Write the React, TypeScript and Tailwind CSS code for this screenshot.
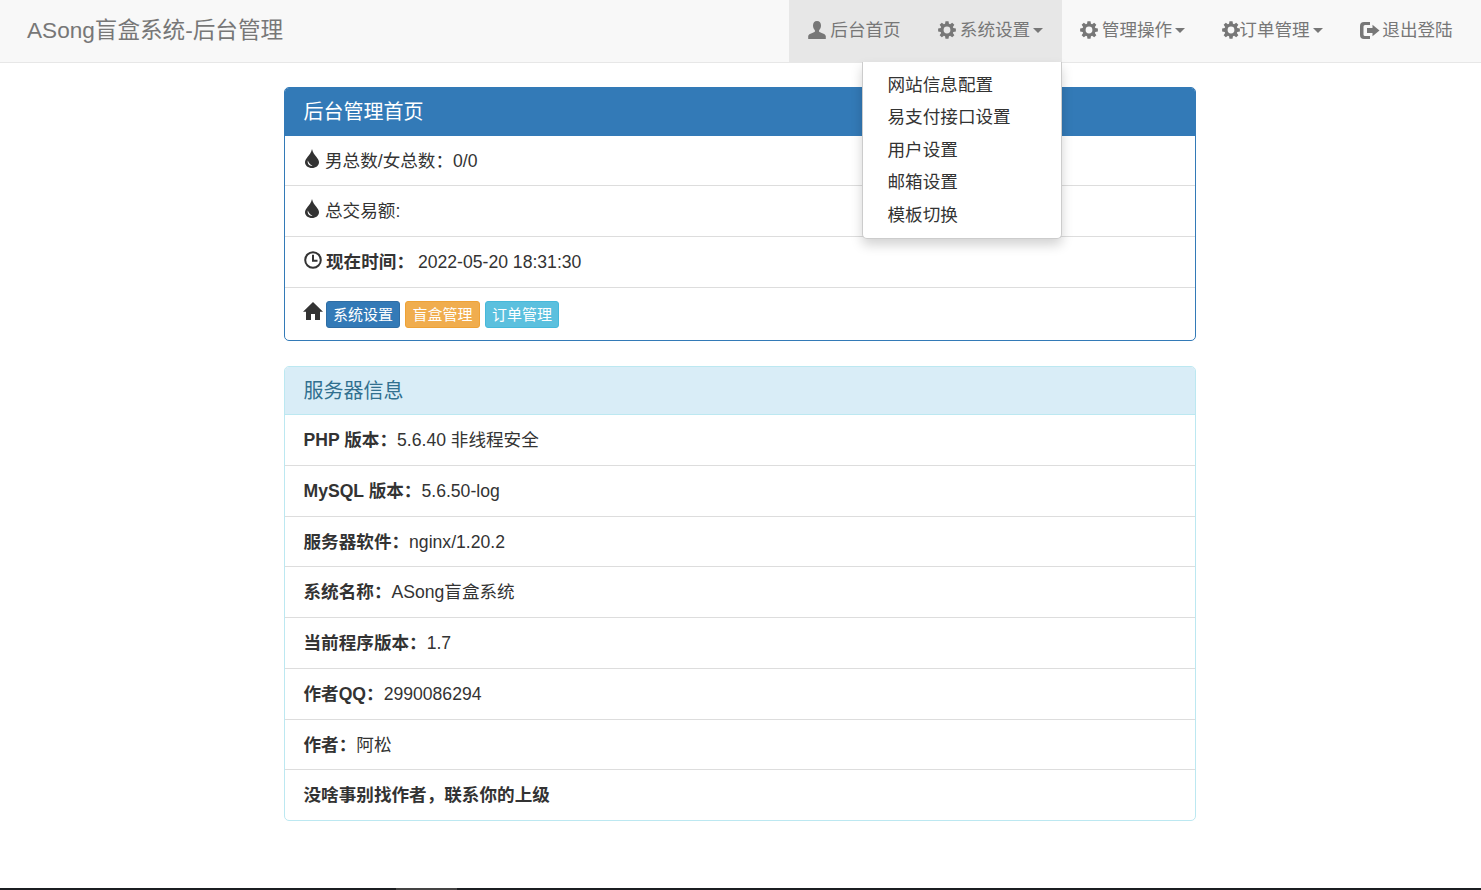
import React from "react";

const font = "[font-family:'Liberation_Sans','Noto_Sans_CJK_SC',sans-serif]";

function gearPath() {
  const pts: string[] = [];
  const teeth = 8;
  for (let i = 0; i < teeth; i++) {
    const a = (i * 2 * Math.PI) / teeth - Math.PI / 2;
    const offs: [number, number][] = [
      [-0.30, 6.6],
      [-0.17, 9],
      [0.17, 9],
      [0.30, 6.6],
    ];
    for (const [d, r] of offs) {
      pts.push(`${(9 + r * Math.cos(a + d)).toFixed(2)} ${(9 + r * Math.sin(a + d)).toFixed(2)}`);
    }
  }
  return `M${pts.join("L")}Z M9 5.6a3.4 3.4 0 1 0 0 6.8a3.4 3.4 0 1 0 0-6.8Z`;
}
const GEAR = gearPath();

function Gear() {
  return (
    <svg viewBox="0 0 18 18" className="h-[18px] w-[18px] shrink-0" fill="currentColor" fillRule="evenodd">
      <path d={GEAR} />
    </svg>
  );
}

function User() {
  return (
    <svg viewBox="0 0 18 18" className="h-[18px] w-[18px] shrink-0" fill="currentColor">
      <path d="M9 0C6.4 0 5 2 5 4.6c0 2 .8 3.6 1.900 4.600v1.200C6.900 11.600 0.600 12.200 0.200 15v3h17.600v-3c-.4-2.800-6.700-3.400-6.700-4.600V9.200C12.200 8.200 13 6.600 13 4.600 13 2 11.600 0 9 0z" />
    </svg>
  );
}

function LogOut() {
  return (
    <svg viewBox="0 0 20 17" className="h-[17px] w-[20px] shrink-0" fill="currentColor">
      <path d="M4 0h6v3H5a1.500 1.500 0 0 0-1.500 1.500v8A1.500 1.500 0 0 0 5 14h5v3H4a4 4 0 0 1-4-4V4a4 4 0 0 1 4-4z" />
      <path d="M7 6h5.500V2.800L19.500 8.500l-7 5.700V11H7z" />
    </svg>
  );
}

function Drop() {
  return (
    <svg viewBox="0 0 14 19" className="mb-[5px] ml-[1.5px] mr-[6px] h-[19px] w-[14px] shrink-0" fill="currentColor">
      <path
        fillRule="evenodd"
        d="M7 0C7.800 3.500 9.500 5.500 11.500 8C13 10 14 11.500 14 13.200 14 16.600 10.900 19 7 19S0 16.600 0 13.200C0 11.500 1 10 2.500 8C4.500 5.500 6.200 3.500 7 0zM2.800 11.500C2.200 14.800 4.200 17 7.600 17 5.300 15.800 3.800 14 2.800 11.500z"
      />
    </svg>
  );
}

function Clock() {
  return (
    <svg viewBox="0 0 18 18" className="mb-[4px] ml-[0.5px] mr-[4px] h-[18px] w-[18px] shrink-0" fill="none" stroke="currentColor" strokeWidth="2">
      <circle cx="9" cy="9" r="7.800" />
      <path d="M9 3.800V9.800H13.500" />
    </svg>
  );
}

function Home() {
  return (
    <svg viewBox="0 0 20 18" className="mb-[7px] ml-[-0.5px] mr-[3px] h-[18px] w-[20px] shrink-0" fill="currentColor">
      <path d="M10 0L20 9.800H17V18H12V12H8V18H3V9.800H0Z" />
    </svg>
  );
}

function Caret() {
  return <span className="ml-[3px] inline-block h-0 w-0 border-x-[5px] border-t-[5px] border-x-transparent border-t-current align-middle" />;
}

function NavItem({ icon, label, caret, active, gap, w }: { icon: React.ReactNode; label: string; caret?: boolean; active?: boolean; gap: string; w: string }) {
  return (
    <div className={`flex h-[62px] items-center justify-center pb-[1px] text-[17.6px] text-[#777] ${w} ${active ? "bg-[#e7e7e7]" : ""}`}>
      <span className={`flex items-center ${gap}`}>
        {icon}
        <span>{label}</span>
      </span>
      {caret && <Caret />}
    </div>
  );
}

function Row({ children, last, h }: { children: React.ReactNode; last?: boolean; h: string }) {
  return (
    <div className={`flex items-center px-[18.5px] text-[17.6px] text-[#333] ${h} ${last ? "" : "border-b border-[#ddd]"}`}>
      {children}
    </div>
  );
}

function Label({ children, color }: { children: React.ReactNode; color: string }) {
  return <span className={`mr-[5px] flex h-[27px] items-center justify-center rounded-[3px] border pt-[2px] text-[15px] text-white ${color}`}>{children}</span>;
}

const menu = ["网站信息配置", "易支付接口设置", "用户设置", "邮箱设置", "模板切换"];

const info: [string, string, string][] = [
  ["PHP 版本：", "5.6.40 非线程安全", "h-[51px]"],
  ["MySQL 版本：", "5.6.50-log", "h-[51px]"],
  ["服务器软件：", "nginx/1.20.2", "h-[50px] pt-[1px]"],
  ["系统名称：", "ASong盲盒系统", "h-[51px]"],
  ["当前程序版本：", "1.7", "h-[51px]"],
  ["作者QQ：", "2990086294", "h-[51px]"],
  ["作者：", "阿松", "h-[50px] pt-[1px]"],
  ["没啥事别找作者，联系你的上级", "", "h-[50px]"],
];

export default function App() {
  return (
    <div className={`relative flex h-[890px] flex-col overflow-hidden bg-white ${font}`}>
      <header className="flex h-[63px] shrink-0 items-start justify-between border-b border-[#e7e7e7] bg-[#f8f8f8]">
        <div className="flex h-[62px] items-center pl-[27px] text-[22.6px] text-[#777]">ASong盲盒系统-后台管理</div>
        <nav className="flex pr-[9px]">
          <NavItem w="w-[129px] pl-[2px]" gap="gap-[4px]" active icon={<User />} label="后台首页" />
          <NavItem w="w-[144px] pl-[1px]" gap="gap-[4px]" active caret icon={<Gear />} label="系统设置" />
          <NavItem w="w-[141px]" gap="gap-[4px]" caret icon={<Gear />} label="管理操作" />
          <NavItem w="w-[138px] pl-[1px]" gap="-space-x-px" caret icon={<Gear />} label="订单管理" />
          <NavItem w="w-[131px]" gap="gap-[2px]" icon={<LogOut />} label="退出登陆" />
        </nav>
      </header>

      <main className="ml-[284px] mt-[24px] w-[912px]">
        <section className="overflow-hidden rounded-[5px] border border-[#337ab7]">
          <div className="flex h-[48px] items-center bg-[#337ab7] px-[18.5px] text-[20px] text-white">后台管理首页</div>
          <Row h="h-[50px] pt-[1px]">
            <Drop />
            男总数/女总数：0/0
          </Row>
          <Row h="h-[51px]">
            <Drop />
            总交易额:
          </Row>
          <Row h="h-[51px]">
            <Clock />
            <b>现在时间：</b>
            <span className="ml-[4px]">2022-05-20 18:31:30</span>
          </Row>
          <Row last h="h-[52px]">
            <Home />
            <Label color="w-[74px] border-[#2e6da4] bg-[#337ab7]">系统设置</Label>
            <Label color="w-[75px] border-[#eea236] bg-[#f0ad4e]">盲盒管理</Label>
            <Label color="w-[74px] border-[#46b8da] bg-[#5bc0de]">订单管理</Label>
          </Row>
        </section>

        <section className="mt-[25px] overflow-hidden rounded-[5px] border border-[#bce8f1]">
          <div className="flex h-[48px] items-center border-b border-[#bce8f1] bg-[#d9edf7] px-[18.5px] pt-[1px] text-[20px] text-[#31708f]">服务器信息</div>
          {info.map(([k, v, h], i) => (
            <Row key={k} h={h} last={i === info.length - 1}>
              <b>{k}</b>
              <span>{v}</span>
            </Row>
          ))}
        </section>
      </main>

      <div className="absolute left-[862px] top-[62px] w-[200px] rounded-b-[5px] border border-t-0 border-[#ccc] bg-white pb-[7px] pt-[7px] shadow-[0_6px_12px_rgba(0,0,0,0.175)]">
        {menu.map((m) => (
          <div key={m} className="flex h-[32.4px] items-center pl-[24.5px] text-[17.6px] text-[#333]">{m}</div>
        ))}
      </div>

      <div className="absolute bottom-0 left-0 h-[2px] w-full bg-[#1b1e21]">
        <div className="absolute left-[396px] top-0 h-[2px] w-[61px] bg-[#444]" />
      </div>
    </div>
  );
}
